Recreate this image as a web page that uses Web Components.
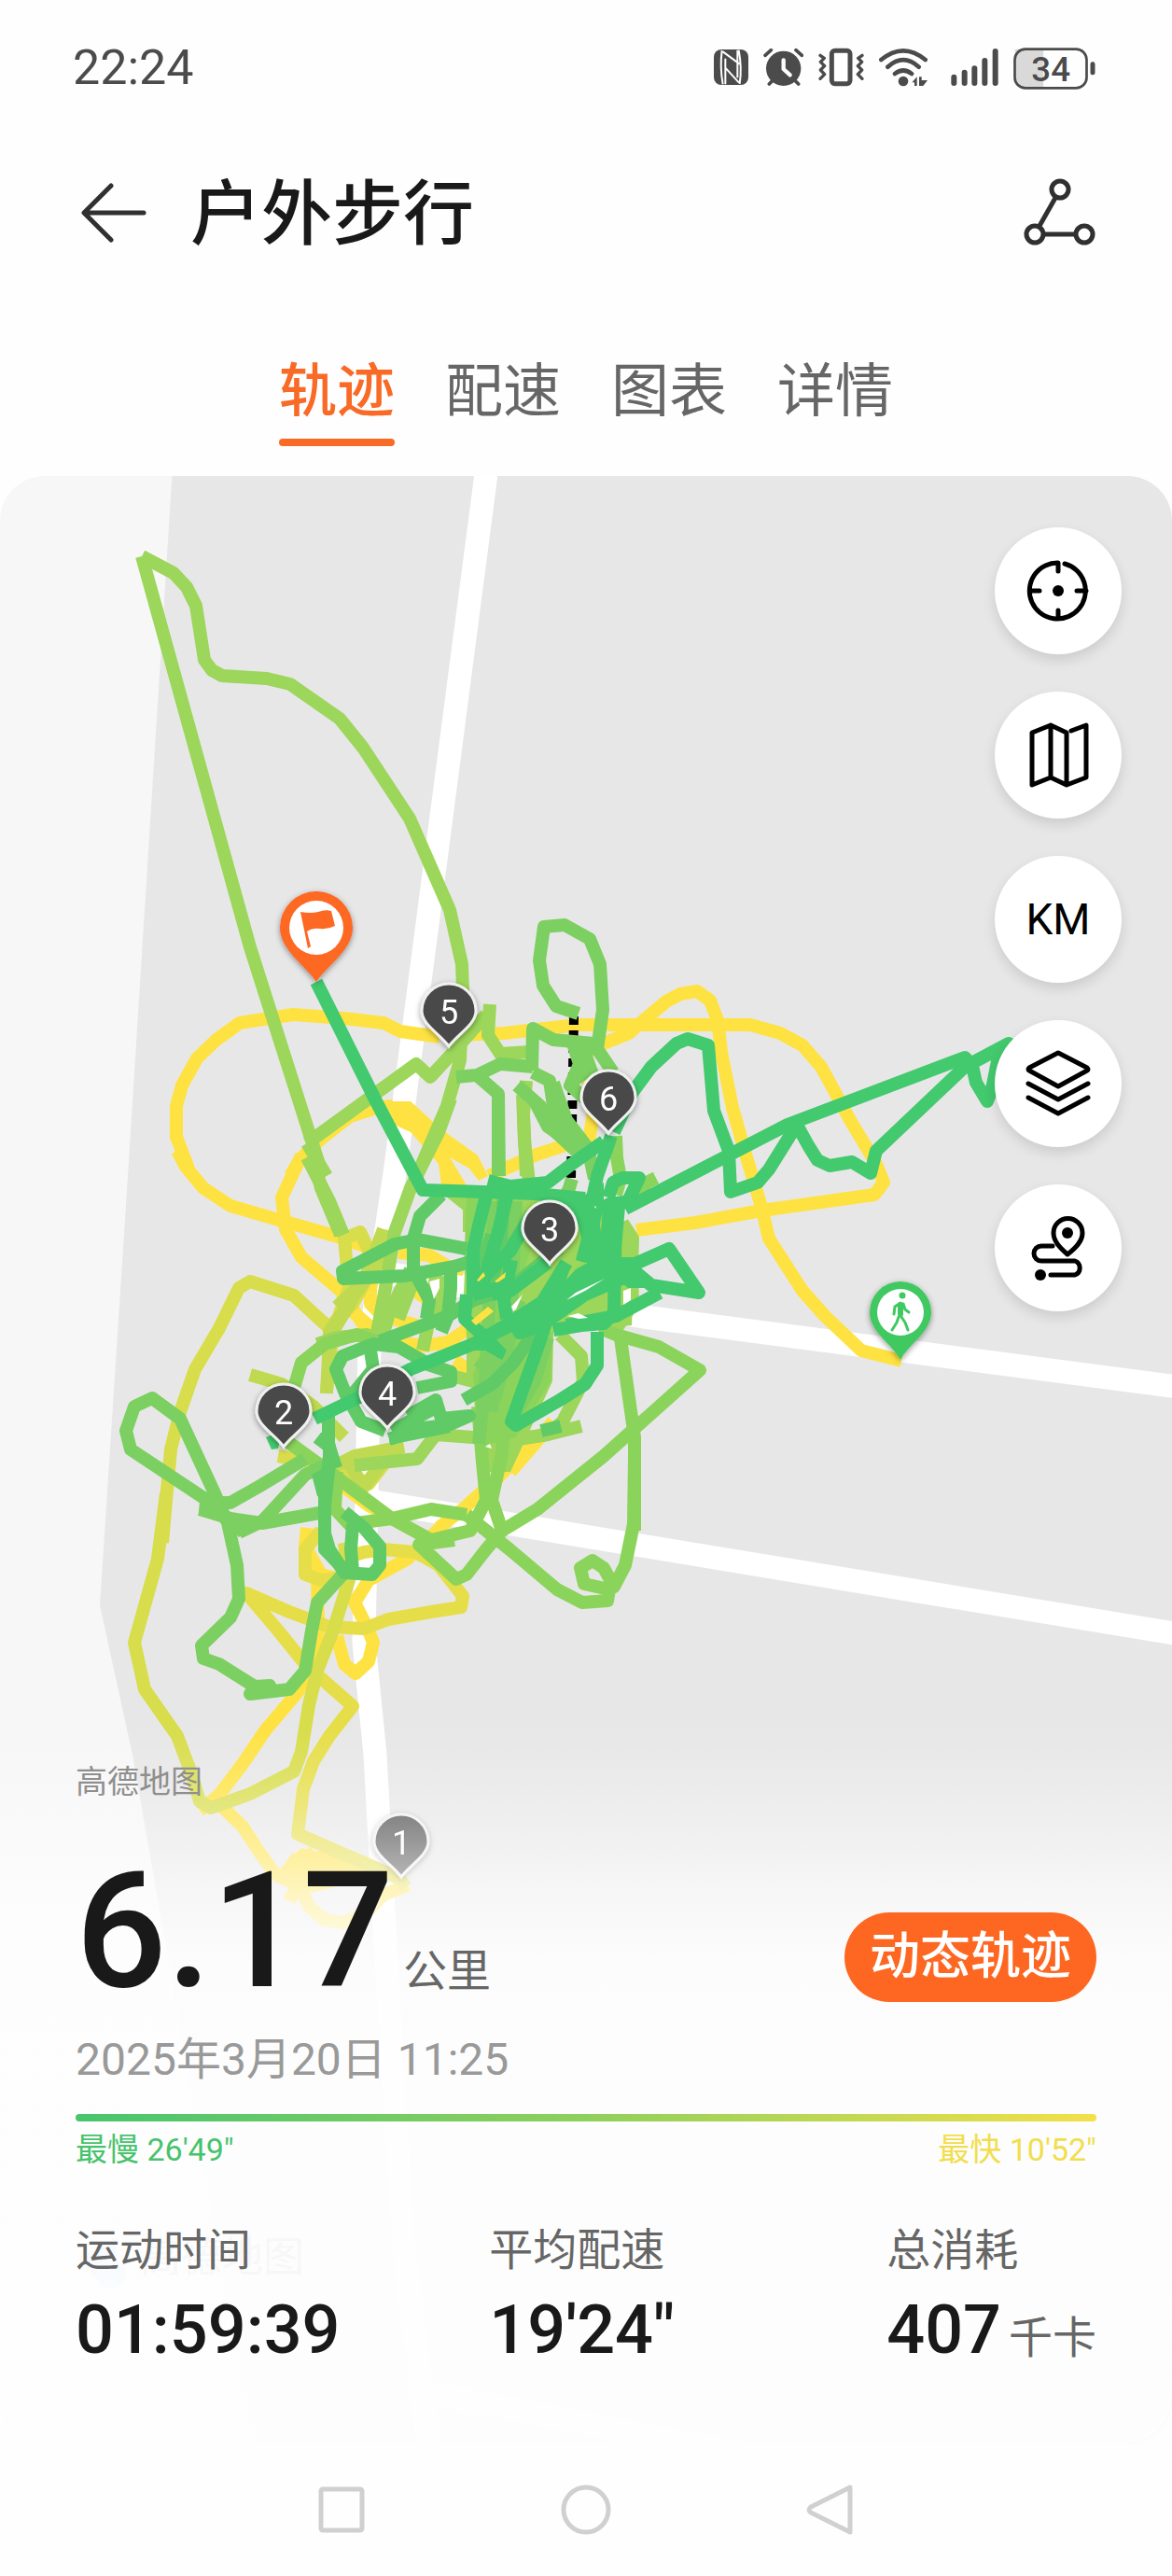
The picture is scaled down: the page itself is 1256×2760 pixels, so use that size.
<!DOCTYPE html>
<html lang="zh-CN">
<head>
<meta charset="utf-8">
<meta name="viewport" content="width=device-width, initial-scale=1">
<title>户外步行</title>
<style>
  html, body { margin: 0; height: 100%; }
  body {
    background: #fefefe;
    color: #191919;
    font-family: Roboto, "Noto Sans CJK SC", sans-serif;
  }
</style>
</head>
<body>
<walk-page>
  <status-bar slot="top">22:24</status-bar>
  <page-header slot="top">户外步行</page-header>
  <tab-strip slot="top">
    <tab-item selected>轨迹</tab-item>
    <tab-item>配速</tab-item>
    <tab-item>图表</tab-item>
    <tab-item>详情</tab-item>
  </tab-strip>
  <route-map>
    <map-tool slot="tools" label="定位">
      <svg viewBox="0 0 72 72"><path d="M43 7A30 30 0 1 1 36 6V15M6 36h10M56 36h10M36 66V57"/><circle cx="36" cy="36" r="6" fill="#000" stroke="none"/></svg>
    </map-tool>
    <map-tool slot="tools" label="地图类型">
      <svg viewBox="0 0 72 72"><path d="M8 12L28 4V60L8 68ZM28 4L45 12V68L28 60M50 10L66 4V60L45 68"/></svg>
    </map-tool>
    <map-tool slot="tools" label="公里标记">KM</map-tool>
    <map-tool slot="tools" label="图层">
      <svg viewBox="0 0 72 72"><path d="M36 3L67 19Q69 21 67 22L36 39L5 22Q3 21 5 19ZM4 36L36 53L68 36M4 51L36 68L68 51"/></svg>
    </map-tool>
    <map-tool slot="tools" label="路线">
      <svg viewBox="0 0 72 72"><path d="M46 43C38 36 31 29 31 20A15 15 0 0 1 62 20C62 29 55 36 46 43ZM30 34H18A8 8 0 0 0 18 50H54A8 8 0 0 1 54 65H28"/><circle cx="46" cy="20" r="6" fill="#000" stroke="none"/><circle cx="17" cy="65" r="6" fill="#000" stroke="none"/></svg>
    </map-tool>
    <workout-panel slot="panel">
      <span slot="source">高德地图</span>
      <span slot="distance">6.17</span>
      <span slot="unit">公里</span>
      <span slot="action">动态轨迹</span>
      <time slot="date" datetime="2025-03-20T11:25">2025年3月20日 11:25</time>
      <span slot="slow">最慢 26'49"</span>
      <span slot="fast">最快 10'52"</span>
      <stat-cell slot="stats" label="运动时间">01:59:39</stat-cell>
      <stat-cell slot="stats" label="平均配速">19'24"</stat-cell>
      <stat-cell slot="stats" label="总消耗" unit="千卡">407</stat-cell>
    </workout-panel>
  </route-map>
  <nav-bar slot="bottom"></nav-bar>
</walk-page>

<script>
const define = (name, html, setup) => {
  const template = document.createElement('template');
  template.innerHTML = html;
  customElements.define(name, class extends HTMLElement {
    constructor() {
      super();
      this.attachShadow({ mode: 'open' }).append(template.content.cloneNode(true));
    }
    connectedCallback() { if (setup) setup(this, this.shadowRoot); }
  });
};

define('walk-page', `
<style>
  :host { display: flex; flex-direction: column; min-height: 100vh; }
  main { flex: 1; display: flex; flex-direction: column; }
</style>
<slot name="top"></slot>
<main><slot></slot></main>
<slot name="bottom"></slot>`);

define('status-bar', `
<style>
  :host { display: flex; align-items: center; justify-content: space-between; height: 146px; padding: 0 82px 0 78px; box-sizing: border-box; color: #4b4b4b; font-size: 52px; line-height: 60px; }
  .icons { display: flex; gap: 16px; align-items: center; }
  svg { display: block; height: 48px; fill: #4b4b4b; }
  .line { fill: none; stroke: #4b4b4b; stroke-linecap: round; stroke-linejoin: round; }
</style>
<span><slot></slot></span>
<div class="icons">
  <svg width="37" viewBox="75 57 111 144"><rect x="75" y="69" width="111" height="114" rx="24"/><path d="M101 72Q94 125 104 181M155 71Q166 128 158 180M104 76L158 116M112 128L156 176M112 98V181M151 71V160" fill="none" stroke="#fefefe" stroke-width="6"/></svg>
  <svg width="43" viewBox="233 57 129 144"><circle cx="298" cy="130" r="56"/><path class="line" stroke-width="11" d="M239 88L258 71M357 88L338 71M252 180L262 170M346 180L334 168"/><path d="M298 103V132L319 151" fill="none" stroke="#fefefe" stroke-width="13" stroke-linecap="round" stroke-linejoin="round"/></svg>
  <svg width="49" viewBox="411 57 147 144"><rect class="line" x="454" y="73" width="59" height="106" rx="10" stroke-width="15"/><path class="line" stroke-width="10" d="M417 88L430 97L418 109L431 122L418 135L431 149L417 163M552 88L539 97L551 109L538 122L551 135L538 149L552 163"/></svg>
  <svg width="52" viewBox="606 57 156 144"><path class="line" stroke-width="14" d="M613 102Q684 44 755 102M634 125Q684 80 734 125M657 147Q684 126 711 147"/><circle cx="684" cy="171" r="16"/><path d="M712 175L728 157V186H720V175ZM735 157H743V168H762L748 186H735Z"/></svg>
  <svg width="60" viewBox="808 57 180 144"><path class="line" stroke-width="18" d="M845 158V177M879 143V177M911 130V177M944 105V177M978 75V177"/></svg>
  <svg width="88" viewBox="1034 53 263 144"><path d="M1039 64H1130V188H1062Q1039 188 1039 164Z" fill="#d9d9d9"/><rect class="line" x="1038" y="64" width="231" height="125" rx="34" stroke-width="8"/><rect x="1281" y="105" width="15" height="42" rx="7"/><text x="1154" y="166" font-size="110" font-weight="500" text-anchor="middle">34</text></svg>
</div>`);

define('page-header', `
<style>
  :host { display: flex; align-items: center; height: 164px; padding: 0 82px; box-sizing: border-box; }
  button { all: unset; display: block; }
  svg { display: block; width: 78px; height: 78px; fill: none; stroke: #303030; stroke-width: 5; stroke-linecap: round; stroke-linejoin: round; }
  h1 { flex: 1; margin: 0 0 0 44px; padding-top: 4px; font-size: 76px; font-weight: 500; line-height: 100px; }
</style>
<button aria-label="返回"><svg viewBox="0 0 78 78"><path d="M72 39H9M37 10L8 39L37 68"/></svg></button>
<h1><slot></slot></h1>
<button aria-label="分享"><svg viewBox="0 0 78 78"><circle cx="40" cy="14" r="9"/><circle cx="13" cy="62" r="9"/><circle cx="66" cy="62" r="9"/><path d="M35 23L18 53M23 62H56"/></svg></button>`);

define('tab-strip', `
<style>
  :host { display: block; height: 200px; padding-top: 65px; box-sizing: border-box; }
  nav { display: flex; justify-content: center; gap: 54px; }
</style>
<nav role="tablist"><slot></slot></nav>`);

define('tab-item', `
<style>
  :host { display: block; }
  button { all: unset; display: block; color: #666; font-size: 62px; line-height: 90px; }
  button::after { content: ""; display: block; height: 8px; margin-top: 5px; border-radius: 4px; }
  :host([selected]) button { color: #f96a26; font-weight: 500; }
  :host([selected]) button::after { background: #f96a26; }
</style>
<button role="tab"><slot></slot></button>`, (host, root) => {
  root.querySelector('button').setAttribute('aria-selected', host.hasAttribute('selected'));
});

define('map-tool', `
<style>
  :host { display: block; }
  button { all: unset; display: grid; place-items: center; width: 136px; height: 136px; border-radius: 50%; background: #fff; box-shadow: 0 6px 14px rgba(0, 0, 0, .12); color: #000; font-size: 46px; line-height: 60px; }
  ::slotted(svg) { display: block; width: 72px; height: 72px; fill: none; stroke: #000; stroke-width: 5; stroke-linecap: round; stroke-linejoin: round; }
</style>
<button><slot></slot></button>`, (host, root) => {
  root.querySelector('button').setAttribute('aria-label', host.getAttribute('label'));
});

define('stat-cell', `
<style>
  :host { display: flex; flex-direction: column; gap: 16px; }
  .label { color: #666; font-size: 47px; line-height: 60px; }
  .value { display: flex; align-items: baseline; gap: 8px; font-size: 72px; font-weight: 500; line-height: 80px; white-space: nowrap; }
  .unit { color: #666; font-size: 47px; font-weight: 400; line-height: 60px; }
</style>
<span class="label"></span>
<span class="value"><slot></slot><span class="unit"></span></span>`, (host, root) => {
  root.querySelector('.label').textContent = host.getAttribute('label');
  const unit = root.querySelector('.unit');
  if (host.hasAttribute('unit')) unit.textContent = host.getAttribute('unit');
  else unit.remove();
});

define('workout-panel', `
<style>
  :host { display: block; padding: 38px 81px 81px; background: linear-gradient(rgba(254,254,254,0) 0, rgba(254,254,254,.15) 50px, rgba(254,254,254,.45) 125px, rgba(254,254,254,.72) 190px, rgba(254,254,254,.9) 250px, rgba(254,254,254,.95) 350px, rgba(254,254,254,.97)); }
  .source { color: #8f8f8f; font-size: 34px; line-height: 40px; }
  .hero { display: flex; justify-content: space-between; align-items: flex-end; margin-top: 52px; }
  .distance { display: flex; align-items: baseline; gap: 10px; font-size: 172px; font-weight: 500; line-height: 176px; }
  .unit { color: #666; font-size: 47px; font-weight: 400; line-height: 60px; }
  button { all: unset; height: 96px; margin-bottom: 12px; padding: 0 27px; border-radius: 48px; background: #fd6721; color: #fff; font-size: 54px; font-weight: 500; line-height: 96px; }
  .date { margin-top: 20px; color: #999; font-size: 48px; line-height: 60px; }
  .bar { height: 8px; margin-top: 28px; border-radius: 4px; background: linear-gradient(90deg, #48c56f, #8fd05c 50%, #f3e04a); }
  .range { display: flex; justify-content: space-between; margin-top: 10px; font-size: 34px; line-height: 40px; }
  .slow { color: #47c36c; }
  .fast { color: #f1de4c; }
  .stats { display: grid; grid-template-columns: 51fr 49fr auto; margin-top: 58px; }
</style>
<div class="source"><slot name="source"></slot></div>
<div class="hero">
  <div class="distance"><slot name="distance"></slot><span class="unit"><slot name="unit"></slot></span></div>
  <button><slot name="action"></slot></button>
</div>
<div class="date"><slot name="date"></slot></div>
<div class="bar"></div>
<div class="range"><span class="slow"><slot name="slow"></slot></span><span class="fast"><slot name="fast"></slot></span></div>
<div class="stats"><slot name="stats"></slot></div>`);

define('nav-bar', `
<style>
  :host { display: flex; justify-content: center; align-items: center; gap: 208px; height: 142px; }
  button { all: unset; display: block; }
  svg { display: block; width: 54px; height: 54px; fill: none; stroke: #d0d0d0; stroke-width: 5; stroke-linejoin: round; }
</style>
<button aria-label="最近任务"><svg viewBox="0 0 54 54"><rect x="5" y="5" width="44" height="44" rx="2"/></svg></button>
<button aria-label="主页"><svg viewBox="0 0 54 54"><circle cx="27" cy="27" r="24"/></svg></button>
<button aria-label="后退"><svg viewBox="0 0 54 54"><path d="M48 3V51L6 30Q2 27 6 24Z"/></svg></button>`);

/* Each survey tile stores its points on its own grid: origin x, origin y, units per pixel across, units per pixel down. */
const TILES = {
  A: [100, 560, 2.8, 2.24],
  B: [500, 960, 2.529, 3],
  C: [100, 1240, 2.376, 3],
  D: [100, 1560, 2.376, 3],
  E: [340, 1180, 3, 3]
};

/* Pace colour, then "tile: x,y x,y ..." lines, drawn in order. A leading * fills the shape. */
const FAST_TRACKS = [
  ['#fee242', `
B:1178,1495 1070,1460 970,1350 910,1270 820,1100 800,1000 760,850 720,680 690,500 680,400 660,335 625,305 580,315 540,340 480,400 440,440 360,480 320,510 325,570 345,690 335,775 260,805 190,830 60,900
B:460,1075 620,1050 800,1010 1105,960 1130,920 1110,860 1040,720 960,550 910,480 850,440 770,415 480,415 300,415 100,440 -20,448
A:1040,1235 920,1220 870,1200 750,1190 600,1180 440,1200 370,1240 310,1285 265,1350 248,1400 248,1475 285,1550
C:215,-20 235,30 280,100 350,155 480,205 640,262 720,300
A:900,1400 860,1402 770,1425 680,1480 620,1530 590,1568
C:530,-5 480,130 490,230 530,320 630,430 690,540 750,610
*E:235,0 300,0 400,90 515,175 550,240 520,255 490,215 425,180 480,270 400,270 390,200 300,100 235,70
E:260,485 360,495 420,530 470,540
E:180,560 170,600 170,650 210,690 320,720
E:280,560 330,620 400,660
E:90,640 120,680 190,740
E:260,775 340,785 420,775 500,720 560,670
E:440,835 500,870 530,900
E:760,1030 700,1100 620,1190
C:1120,910 1030,1030 940,1130 880,1190
C:640,1060 700,1120 760,1160
D:900,210 800,330 700,400 665,470 700,560 712,600 700,660 668,698 640,670 620,580
D:545,230 540,290 580,380 640,400
D:570,390 572,560 560,660 520,760 440,880 380,990 320,1090 270,1140
D:320,1120 380,1190 420,1270 460,1340 520,1380
D:500,1290 540,1330 500,1430
D:540,1270 560,1300 620,1300 580,1260
D:530,1390 550,1450 590,1490 640,1500 700,1460 740,1410 800,1380
*D:480,1320 530,1260 740,1320 740,1350 560,1400 460,1370`],
  ['#e6de48', `
D:650,325 690,310 740,300 820,310 880,350 940,450 935,485 860,500 750,525 690,555 600,550 500,500 390,440 470,560 540,670 660,805 600,900 560,980 535,1070 520,1215 600,1260 700,1315 780,1360 795,1385
D:580,240 540,300 540,380 580,400 640,390`]
];

const SLOW_TRACKS = [
  ['#d8dd4b', `
C:600,550 510,445 400,400 370,420 320,550 260,680 220,820 198,940 185,1100 175,1240
D:185,120 165,330 105,600 130,750 215,900 250,1020 270,1110 300,1130 400,1085 510,1015 530,950 550,800 570,690 610,560 650,400 640,280
C:595,750 610,560 650,420 640,260 680,240 720,350 740,230
C:590,560 660,470 700,380 740,300
C:470,960 560,980 640,1010 700,1050 780,920`],
  ['#bfda50', `
C:400,700 480,730 560,800 640,900
C:600,730 600,560 690,400 750,300
C:650,985 690,1060 760,940
C:740,230 690,400 620,480
E:30,940 40,760 110,640
E:20,1190 120,1140 280,1110`],
  ['#9cd65a', `
A:145,80 470,1020 690,1568
A:640,1490 700,1568
C:560,0 580,100 630,250
C:545,0 600,140 636,250
A:145,80 240,120 280,155 307,200 333,330 355,355 385,368 520,375 590,387 740,470 810,540 950,710 1070,930 1107,1060 1110,1120 1100,1290 1060,1400 980,1550
A:640,1490 970,1300 1010,1330 1080,1270 1180,1180
A:1190,1155 1185,1230 1220,1275 1310,1270
E:430,-10 390,100 300,280 250,420 220,600 190,760
E:660,-20 665,130 680,260
A:1300,1340 1290,1420 1300,1568
*E:500,300 860,320 1000,390 1020,440 1010,720 760,740 755,900 620,1190 520,1190 500,900 480,760 470,620 480,400
E:0,780 60,760 160,750 240,790
E:980,390 1015,440 1010,540 1015,650 970,720 930,740
E:780,750 850,820 855,900 790,1030 740,1070 620,1090 500,1080 380,1070 320,1150 120,1170
E:850,1045 740,1070 620,1090
E:380,560 360,700 340,800
E:300,540 230,680 200,790
E:260,700 300,600 350,540
E:400,560 390,730
E:430,290 490,340 490,420
E:500,780 500,900 420,880`],
  ['#8bd45c', `
C:480,900 600,1010 760,1160 860,1230 960,1200 1000,1100 990,980 980,800
C:620,1010 615,1130 650,1180 760,1160 860,1130 950,1150
D:950,190 1060,300 1180,430 1245,470 1310,465 1315,430 1250,410 1240,360 1270,335 1300,360 1325,420 1355,350 1375,220 1378,0
C:1378,1200 1378,900 1340,560
C:1290,550 1330,570 1440,610 1545,685 1300,960 1130,1130 1040,1200 1015,1100 1040,950 1060,700
D:1040,240 1000,300 950,380 925,395 830,285 920,270
C:510,740 530,660 590,600 670,570 720,590
*E:480,310 560,300 580,760 760,740 750,900 640,1080 560,1100 520,1100 500,880 560,700 470,540
E:700,350 640,560 560,720
E:800,520 700,740 640,900
E:960,110 962,180 975,250 960,300
E:1090,245 1060,260 1000,320`],
  ['#7cd061', `
A:1455,1178 1390,1160 1350,1110 1337,1050 1353,970 1415,965 1490,1000 1520,1060 1530,1170 1510,1280
A:1315,1315 1318,1215 1380,1240 1500,1250 1560,1320
A:1090,1330 1150,1325 1220,1300 1320,1305
A:1150,1325 1215,1370 1217,1568
E:583,-20 583,240
A:1320,1320 1370,1340 1380,1400 1440,1500
A:1270,1350 1340,1400 1370,1450 1450,1510
A:1440,1250 1460,1300 1430,1350 1500,1400
A:1470,1260 1500,1330
A:1440,1250 1490,1310 1440,1340
E:700,0 740,80 810,130 880,180
E:760,-60 800,60 870,150 890,250
E:820,250 810,280 790,320
E:590,760 570,900 560,1000
E:740,760 700,900 640,1000
D:640,375 570,470 555,560 540,690 500,750 400,765 450,738 410,740 320,670 280,650 275,610 350,520 370,460 365,350 340,200
C:340,1170 310,1080 220,840 150,775 105,800 82,880 95,940 300,1110 350,1110 420,1060 540,970
C:270,1130 350,1160 430,1175 590,1140
C:370,1205 430,1170 540,1020 590,990
*C:270,1100 320,1080 350,1150 430,1180 370,1220 340,1180 268,1140
E:570,320 540,900 520,1100
E:640,320 620,760 570,960
E:520,860 600,760 650,640`],
  ['#5fca66', `
E:480,475 320,445 250,460 80,545 85,570 280,560 440,530 540,500
E:400,300 330,370 310,440 310,540 360,640 350,700
E:430,540 430,600 420,690 400,740
E:200,770 420,690 500,640
E:350,840 260,790 180,780 80,820 60,860 90,940 140,1030 220,1060
E:170,800 180,860 100,960
E:340,840 430,870 430,900 320,920
E:230,1085 340,1050 420,1040 490,1010 400,1020 380,960 290,1010
E:470,960 560,910 630,840 700,740
E:240,1060 380,985
E:35,1000 35,1100 60,1180
C:570,900 600,930 600,980 590,1120 590,1260 650,1340
D:600,0 590,130 590,250 600,300 640,375 710,380 730,350 730,290 690,230 640,180
D:660,370 655,300 660,220
*D:555,60 600,30 600,150 570,130
*E:230,1090 380,1030 430,1065 235,1105
C:1140,880 1190,865
E:600,300 590,450 560,600
E:680,380 600,500 500,620
E:780,470 620,600 500,640
E:560,430 500,600`],
  ['#43c96e', `
E:-3,-384 190,0 340,285 530,290 700,298 860,312
B:430,1005 650,870 870,735 1350,520 1370,545 1380,600 1410,660 1425,620 1440,530 1470,475 1350,550 1110,820 1095,890 1045,855 985,868 950,850 925,800 895,735 820,880 790,920 715,950 710,820 670,690 655,480 600,460 570,475 500,550 450,630 400,760
B:440,1190 550,1135 630,1275 500,1250 440,1190
E:900,742 900,850 860,910 780,960 640,1040 625,1030 720,760 790,540
E:550,255 620,272 740,262 820,200 920,130
E:945,110 900,240 880,340 900,480 950,560
E:500,620 500,480 520,400 545,290
E:610,310 580,430 530,590
E:480,620 475,700 540,760 620,710 760,620 900,540
E:-10,1020 130,955 300,860 500,780 620,720 780,640 930,570
E:610,700 600,640 625,510
E:620,590 500,620
E:640,720 650,745 720,720 860,620 1000,560
E:760,735 850,720 920,715 955,680 960,340
E:860,500 930,480 940,330 1010,320
E:935,310 950,260 980,245 1035,245 1000,320
E:1100,615 960,690 800,720
E:740,520 620,610 560,620
E:690,360 620,480 510,590
E:800,520 690,700 650,740
*E:700,290 860,300 920,260 920,340 900,430 900,490 860,520 830,510 850,440 840,400 820,360
*E:940,340 990,340 975,500 1020,500 1080,600 1000,600 950,560 850,640 760,700 740,640 830,540 940,480
*E:470,770 560,750 610,800 595,830 540,800 480,800
*C:440,900 480,880 470,935 455,938`],
  ['#fefefe', `
*E:830,615 925,570 860,610 800,640
*E:805,690 840,680 870,695 840,700
*E:625,660 660,620 640,670 630,675
*E:360,580 392,570 392,600 375,635
*E:540,1110 555,1100 562,1115
*E:890,335 898,338 894,345
*E:985,610 1008,600 1008,640 985,655`],
  ['#fee242', `
*E:495,705 550,660 567,675 510,720
*E:512,575 535,550 540,560 520,580
*E:570,580 605,550 603,568 580,582`]
];

const pageCoords = (tile, points) => {
  const [ox, oy, sx, sy] = TILES[tile];
  return points.split(' ').map(p => {
    const [x, y] = p.split(',').map(Number);
    return Math.round(ox + x / sx) + ',' + Math.round(oy + y / sy);
  }).join(' ');
};

const trackMarkup = tracks => '<g class="tracks">' + tracks.map(([colour, lines]) => lines.trim().split('\n').map(line => {
  const solid = line[0] === '*';
  const [tile, points] = line.replace('*', '').split(':');
  const coords = pageCoords(tile, points);
  return solid ? `<polygon points="${coords}" fill="${colour}"/>`
               : `<polyline points="${coords}" stroke="${colour}"/>`;
}).join('')).join('') + '</g>';

const kmPin = (n, x, tip) => `
  <g transform="translate(${x} ${tip})" filter="url(#drop)">
    <path d="M0 -1C-9 -14 -29 -24 -29 -39A29 29 0 0 1 29 -39C29 -24 9 -14 0 -1Z" fill="#484a48" stroke="#f0f0f0" stroke-width="3"/>
    <text y="-25" text-anchor="middle" font-size="36" fill="#fff">${n}</text>
  </g>`;

define('route-map', `
<style>
  :host { position: relative; flex: 1; display: flex; flex-direction: column; justify-content: space-between; overflow: hidden; border-radius: 48px; background: #f8f7f8; }
  .map { position: absolute; inset: 0; width: 100%; height: 100%; }
  .tools { position: relative; display: flex; flex-direction: column; align-items: flex-end; gap: 40px; padding: 55px 54px 0 0; }
  .panel { position: relative; }
  .tracks polyline { fill: none; stroke-width: 14; stroke-linejoin: round; }
</style>
<svg class="map" viewBox="0 510 1256 2108" preserveAspectRatio="xMidYMin slice" role="img" aria-label="轨迹地图">
  <defs><filter id="drop" x="-30%" y="-30%" width="160%" height="160%"><feDropShadow dx="0" dy="2" stdDeviation="3" flood-opacity=".4"/></filter></defs>
  <path d="M185 500L137 1260L107 1720L142 1880L250 2500L275 2620H1256V500Z" fill="#e8e7e8"/>
  <g fill="none" stroke="#fff" stroke-width="25" stroke-linejoin="round">
    <path d="M522 500L424 1250L396 1440L390 1760L402 1880L414 2100L432 2400L460 2630"/>
    <path d="M420 1365L690 1411L1270 1487"/>
    <path d="M390 1607L760 1668L1270 1752"/>
    <path d="M440 2560L800 2630"/>
  </g>
  <g>
    <path d="M84 2420L126 2396L122 2432L108 2446Z" fill="#6aa8f0"/>
    <circle cx="119" cy="2436" r="16" fill="#7cd0f5"/>
    <text x="150" y="2434" font-size="44" fill="#555">高德地图</text>
  </g>
  ${trackMarkup(FAST_TRACKS)}
  <path d="M615 1089L612 1262" stroke="#000" stroke-width="10" stroke-dasharray="9 6"/>
  ${trackMarkup(SLOW_TRACKS)}
  ${kmPin(1, 430, 2012)}${kmPin(2, 304, 1551)}${kmPin(3, 589, 1355)}${kmPin(4, 415, 1531)}${kmPin(5, 481, 1122)}${kmPin(6, 652, 1215)}
  <g transform="translate(339 1052)" filter="url(#drop)">
    <path d="M0 0C-10 -16 -39 -34 -39 -58A39 39 0 0 1 39 -58C39 -34 10 -16 0 0Z" fill="#fd6721"/>
    <circle cy="-58" r="29" fill="#fff"/>
    <path d="M-17 -75Q-6 -73 2 -75Q10 -78 16 -76L20 -60Q12 -56 4 -57Q-4 -58 -10 -54L-6 -38L-9 -36Z" fill="#fd6721"/>
  </g>
  <g transform="translate(965 1457)" filter="url(#drop)">
    <path d="M0 0C-8 -16 -33 -30 -33 -51A33 33 0 0 1 33 -51C33 -30 8 -16 0 0Z" fill="#3fc960"/>
    <circle cy="-51" r="25" fill="#fff"/>
    <g fill="none" stroke="#3fc960" stroke-width="3" stroke-linecap="round" stroke-linejoin="round">
      <circle cx="2" cy="-69" r="2" fill="#3fc960"/>
      <path d="M0 -61L-6 -57L-7 -49M3 -60L5 -54L9 -51M-2 -46L-4 -40L-9 -32M1 -46L5 -40L8 -32"/>
      <path stroke-width="6" d="M0 -59V-49"/>
    </g>
  </g>
</svg>
<div class="tools"><slot name="tools"></slot></div>
<div class="panel"><slot name="panel"></slot></div>`);
</script>
</body>
</html>
